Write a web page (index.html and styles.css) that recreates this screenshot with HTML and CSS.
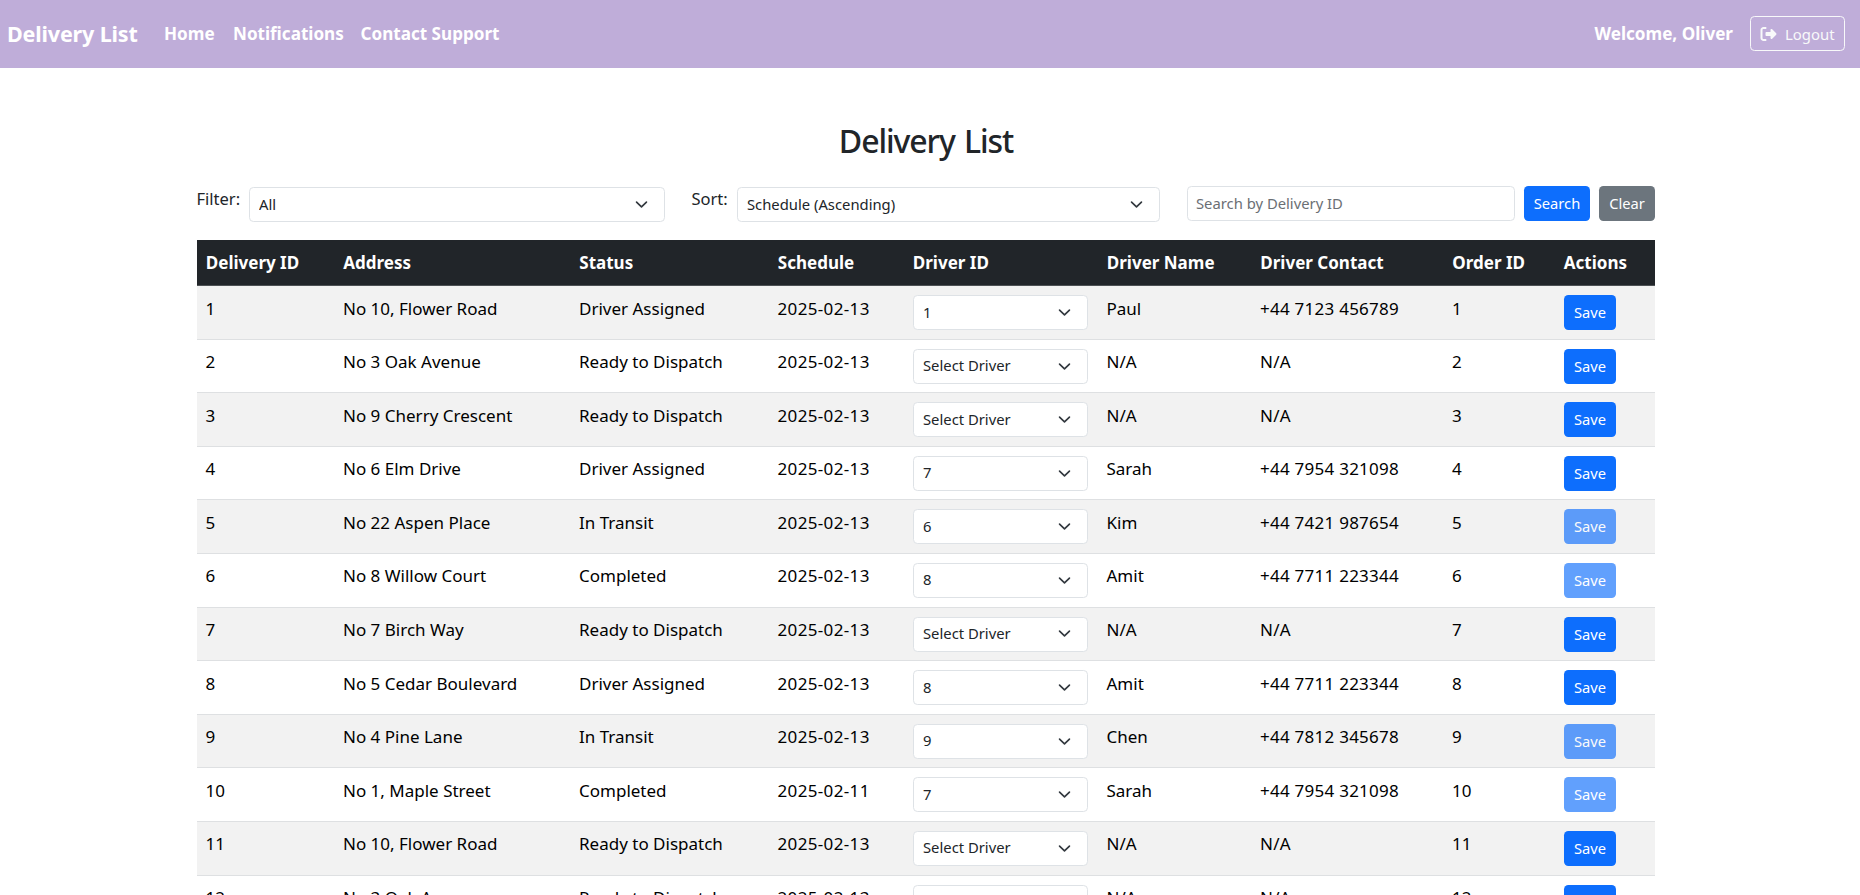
FILE: index.html
```html
<!DOCTYPE html>
<html lang="en">
<head>
<meta charset="utf-8">
<title>Delivery List</title>
<link rel="stylesheet" href="styles.css">
</head>
<body>
<nav class="navbar">
  <a class="brand">Delivery List</a>
  <a class="nav-link home">Home</a>
  <a class="nav-link notifications">Notifications</a>
  <a class="nav-link support">Contact Support</a>
  <span class="welcome">Welcome, Oliver</span>
  <button class="logout"><svg class="logout-icon" viewBox="0 0 512 512"><path fill="currentColor" d="M502.600 278.600c12.500-12.500 12.500-32.800 0-45.300l-128-128c-9.200-9.200-22.900-11.900-34.900-6.900S320 115.100 320 128v64H192c-17.700 0-32 14.300-32 32v64c0 17.700 14.300 32 32 32h128v64c0 12.900 7.800 24.600 19.800 29.600s25.700 2.200 34.900-6.900l128-128zM160 96c17.700 0 32-14.300 32-32s-14.300-32-32-32H96C43 32 0 75 0 128v256c0 53 43 96 96 96h64c17.700 0 32-14.300 32-32s-14.300-32-32-32H96c-17.700 0-32-14.300-32-32V128c0-17.700 14.300-32 32-32h64z"/></svg><span>Logout</span></button>
</nav>
<main class="container">
  <h2 class="title">Delivery List</h2>
  <div class="toolbar">
    <label class="filter-label" for="filter">Filter:</label>
    <select class="select filter-select" id="filter"><option>All</option></select>
    <label class="sort-label" for="sort">Sort:</label>
    <select class="select sort-select" id="sort"><option>Schedule (Ascending)</option></select>
    <input class="search-input" placeholder="Search by Delivery ID">
    <button class="btn search-btn">Search</button>
    <button class="btn clear-btn">Clear</button>
  </div>
  <table class="table">
    <colgroup><col class="c-id"><col class="c-address"><col class="c-status"><col class="c-schedule"><col class="c-driver"><col class="c-name"><col class="c-contact"><col class="c-order"><col class="c-actions"></colgroup>
    <thead><tr><th>Delivery ID</th><th>Address</th><th>Status</th><th>Schedule</th><th>Driver ID</th><th>Driver Name</th><th>Driver Contact</th><th>Order ID</th><th>Actions</th></tr></thead>
    <tbody>
      <tr><td>1</td><td>No 10, Flower Road</td><td>Driver Assigned</td><td>2025-02-13</td><td><select class="select"><option>1</option></select></td><td>Paul</td><td>+44 7123 456789</td><td>1</td><td><button class="btn">Save</button></td></tr>
      <tr><td>2</td><td>No 3 Oak Avenue</td><td>Ready to Dispatch</td><td>2025-02-13</td><td><select class="select"><option>Select Driver</option></select></td><td>N/A</td><td>N/A</td><td>2</td><td><button class="btn">Save</button></td></tr>
      <tr><td>3</td><td>No 9 Cherry Crescent</td><td>Ready to Dispatch</td><td>2025-02-13</td><td><select class="select"><option>Select Driver</option></select></td><td>N/A</td><td>N/A</td><td>3</td><td><button class="btn">Save</button></td></tr>
      <tr><td>4</td><td>No 6 Elm Drive</td><td>Driver Assigned</td><td>2025-02-13</td><td><select class="select"><option>7</option></select></td><td>Sarah</td><td>+44 7954 321098</td><td>4</td><td><button class="btn">Save</button></td></tr>
      <tr><td>5</td><td>No 22 Aspen Place</td><td>In Transit</td><td>2025-02-13</td><td><select class="select"><option>6</option></select></td><td>Kim</td><td>+44 7421 987654</td><td>5</td><td><button class="btn" disabled>Save</button></td></tr>
      <tr><td>6</td><td>No 8 Willow Court</td><td>Completed</td><td>2025-02-13</td><td><select class="select"><option>8</option></select></td><td>Amit</td><td>+44 7711 223344</td><td>6</td><td><button class="btn" disabled>Save</button></td></tr>
      <tr><td>7</td><td>No 7 Birch Way</td><td>Ready to Dispatch</td><td>2025-02-13</td><td><select class="select"><option>Select Driver</option></select></td><td>N/A</td><td>N/A</td><td>7</td><td><button class="btn">Save</button></td></tr>
      <tr><td>8</td><td>No 5 Cedar Boulevard</td><td>Driver Assigned</td><td>2025-02-13</td><td><select class="select"><option>8</option></select></td><td>Amit</td><td>+44 7711 223344</td><td>8</td><td><button class="btn">Save</button></td></tr>
      <tr><td>9</td><td>No 4 Pine Lane</td><td>In Transit</td><td>2025-02-13</td><td><select class="select"><option>9</option></select></td><td>Chen</td><td>+44 7812 345678</td><td>9</td><td><button class="btn" disabled>Save</button></td></tr>
      <tr><td>10</td><td>No 1, Maple Street</td><td>Completed</td><td>2025-02-11</td><td><select class="select"><option>7</option></select></td><td>Sarah</td><td>+44 7954 321098</td><td>10</td><td><button class="btn" disabled>Save</button></td></tr>
      <tr><td>11</td><td>No 10, Flower Road</td><td>Ready to Dispatch</td><td>2025-02-13</td><td><select class="select"><option>Select Driver</option></select></td><td>N/A</td><td>N/A</td><td>11</td><td><button class="btn">Save</button></td></tr>
      <tr><td>12</td><td>No 3 Oak Avenue</td><td>Ready to Dispatch</td><td>2025-02-13</td><td><select class="select"><option>Select Driver</option></select></td><td>N/A</td><td>N/A</td><td>12</td><td><button class="btn">Save</button></td></tr>
    </tbody>
  </table>
</main>
</body>
</html>
```
FILE: styles.css
```css
* { box-sizing: border-box; }
html, body { height: 100%; }
body {
  margin: 0;
  overflow: hidden;
  background: #fff;
  color: #212529;
  font-family: "Segoe UI", "Noto Sans", sans-serif;
  font-size: 17px;
  line-height: 26.4px;
}
button, select, input { font-family: inherit; margin: 0; }

.navbar {
  display: flex;
  align-items: center;
  height: 68px;
  padding: 0 15px 0 7px;
  background: #bfadd9;
  color: #fff;
  font-weight: 700;
  white-space: nowrap;
}
.brand { width: 157px; font-size: 21.5px; letter-spacing: -0.15px; }
.nav-link { font-size: 17.1px; }
.home { width: 69px; }
.notifications { width: 127.500px; }
.welcome { margin-left: auto; margin-right: 17px; font-size: 17.1px; }
.logout {
  display: flex;
  align-items: center;
  gap: 8px;
  width: 95px;
  height: 35px;
  margin-bottom: 1px;
  padding: 0 0 0 9px;
  border: 1px solid #f8f9fa;
  border-radius: 4.4px;
  background: transparent;
  color: #f8f9fa;
  font-size: 14.9px;
}
.logout-icon { width: 17px; height: 16px; }

.container { width: 1458px; margin-left: 197px; }
.title {
  margin: 0;
  padding-top: 52px;
  height: 118px;
  text-align: center;
  font-size: 32px;
  letter-spacing: -1.1px;
  word-spacing: 2px;
  line-height: 42px;
  font-weight: 500;
}
.toolbar { display: flex; height: 54px; white-space: nowrap; }
.filter-label { width: 52px; }
.sort-label { width: 45px; margin-left: 27px; }
.toolbar label { font-size: 16.5px; }
.filter-label, .sort-label { text-indent: -0.5px; }
.select {
  display: block;
  width: 175px;
  height: 35px;
  padding: 0 36px 2px 9px;
  border: 1px solid #dee2e6;
  border-radius: 4.4px;
  appearance: none;
  color: #212529;
  font-size: 14.8px;
  background: #fff url("data:image/svg+xml,%3csvg xmlns='http://www.w3.org/2000/svg' viewBox='0 0 16 16'%3e%3cpath fill='none' stroke='%23343a40' stroke-linecap='round' stroke-linejoin='round' stroke-width='2' d='m2 5 6 6 6-6'/%3e%3c/svg%3e") no-repeat right 15px center / 15px 13.200px;
}
.toolbar .select { margin-top: 1px; }
.toolbar .filter-select { width: 416px; }
.toolbar .sort-select { width: 423px; }
.search-input {
  width: 328px;
  height: 35px;
  margin-left: 27px;
  padding: 0 8px 1px;
  border: 1px solid #dee2e6;
  border-radius: 4.4px;
  font-size: 14.8px;
}
.search-input::placeholder { color: #6b6f74; opacity: 1; }
.btn {
  display: block;
  width: 52px;
  height: 35px;
  padding: 0 0 1px;
  border: 0;
  border-radius: 4.4px;
  background: #0d6efd;
  color: #fff;
  font-size: 14.7px;
}
.btn:disabled { opacity: .65; }
.search-btn { width: 66px; margin-left: 9px; }
.clear-btn { width: 56px; margin-left: 9px; background: #6c757d; }

.table {
  width: 1458px;
  table-layout: fixed;
  border-collapse: separate;
  border-spacing: 0;
  color: #000;
}
.c-id { width: 137.500px; }
.c-address { width: 236px; }
.c-status { width: 198.500px; }
.c-schedule { width: 135px; }
.c-driver { width: 194px; }
.c-name { width: 153.500px; }
.c-contact { width: 192px; }
.c-order { width: 111.500px; }
.c-actions { width: 100px; }
.table th {
  height: 46px;
  padding: 10px 0 0 8.800px;
  vertical-align: top;
  text-align: left;
  background: #212529;
  border-bottom: 1px solid #4d5154;
  color: #fff;
}
.table td {
  height: 53.600px;
  padding: 9.500px 0 0 8.500px;
  vertical-align: top;
  border-bottom: 1px solid #dee0e2;
  white-space: nowrap;
}
.table td:nth-child(5), .table td:nth-child(9) { padding: 9px 0 0 9px; }
.table td:nth-child(4) { letter-spacing: .35px; }
.table td:nth-child(7) { letter-spacing: .25px; }
.table tbody tr:nth-child(odd) td { background: #f2f2f2; }
```
